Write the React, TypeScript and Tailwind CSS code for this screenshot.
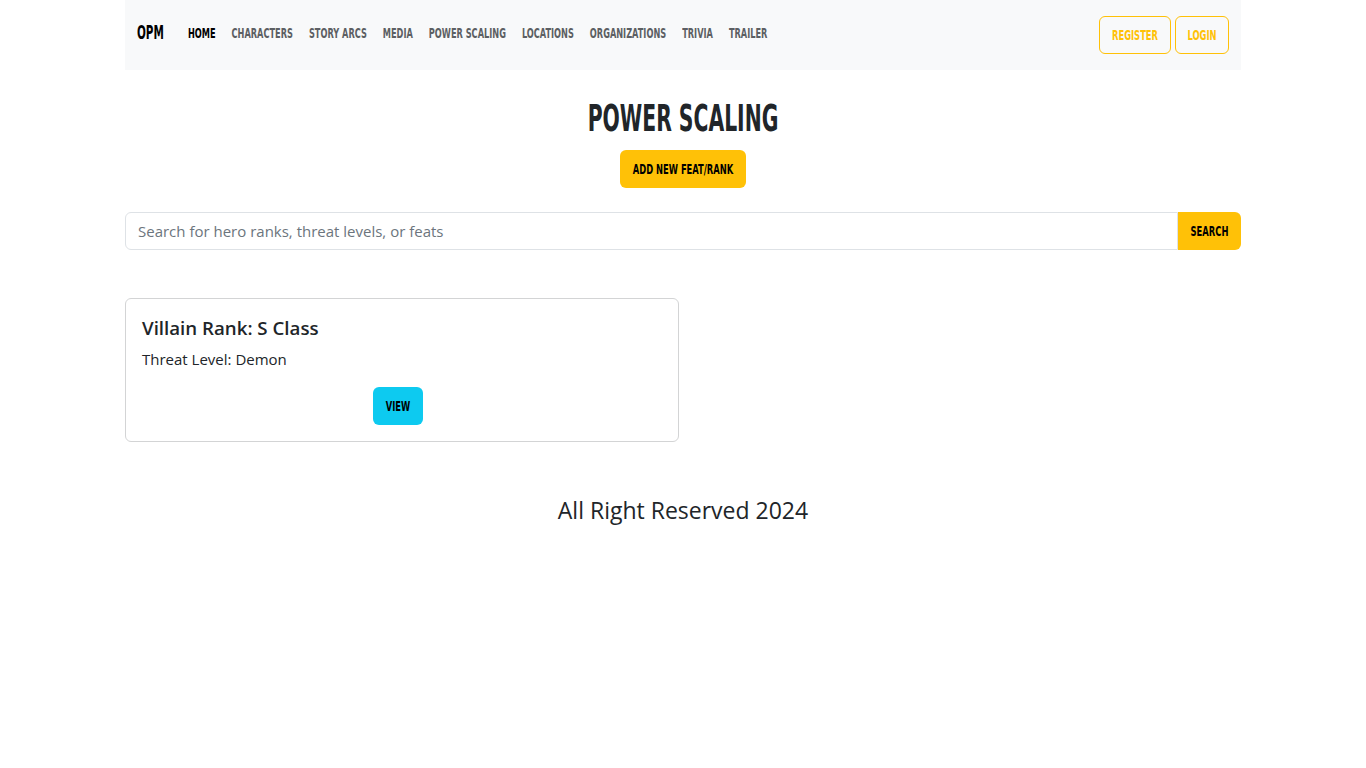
const bebas = "font-['DejaVu_Sans_Condensed','Liberation_Sans',sans-serif] font-bold uppercase";

const Tall = ({ children, className = "" }: { children: React.ReactNode; className?: string }) => (
  <span className={`inline-block scale-y-[1.6] ${className}`}>{children}</span>
);

const links = ["Home", "Characters", "Story Arcs", "Media", "Power Scaling", "Locations", "Organizations", "Trivia", "Trailer"];

const App = () => {
  return (
    <div className="min-h-screen bg-white font-['Open_Sans',sans-serif] text-[#212529]">
      <div className="mx-auto w-[1116px]">
        <nav className="flex h-[70px] items-center bg-[#f8f9fa] px-3">
          <a className={`${bebas} mr-[16px] -translate-y-px text-[11.6px] text-black`}>
            <Tall>OPM</Tall>
          </a>
          <ul className="flex">
            {links.map((l, i) => (
              <li key={l}>
                <a className={`${bebas} block px-2 text-[9.15px] ${i === 0 ? "text-black" : "text-[#5c5f63]"}`}>
                  <Tall>{l}</Tall>
                </a>
              </li>
            ))}
          </ul>
          <div className="ml-auto flex gap-1">
            <button className={`${bebas} h-[38px] w-[72px] rounded-md border border-[#ffc107] text-[9.3px] text-[#ffc107]`}>
              <Tall>Register</Tall>
            </button>
            <button className={`${bebas} h-[38px] w-[54px] rounded-md border border-[#ffc107] text-[9.3px] text-[#ffc107]`}>
              <Tall>Login</Tall>
            </button>
          </div>
        </nav>

        <main className="pt-[26px]">
          <h1 className={`${bebas} text-center text-[22.6px] leading-[44px] text-[#212529]`}>
            <Tall className="scale-y-[1.65]">Power Scaling</Tall>
          </h1>
          <div className="mt-[10px] flex justify-center">
            <button className={`${bebas} h-[38px] w-[126px] rounded-md bg-[#ffc107] text-[9.3px] text-black`}>
              <Tall>Add New Feat/Rank</Tall>
            </button>
          </div>

          <div className="mt-6 flex">
            <input
              className="h-[38px] flex-1 rounded-l-md border border-[#dee2e6] px-3 text-[15px] outline-none placeholder:text-[#6c757d]"
              placeholder="Search for hero ranks, threat levels, or feats"
            />
            <button className={`${bebas} h-[38px] w-[63px] rounded-r-md bg-[#ffc107] text-[9.3px] text-black`}>
              <Tall>Search</Tall>
            </button>
          </div>

          <div className="mt-12 flex">
            <div className="flex h-[144px] w-[554px] flex-col rounded-md border border-[#d3d4d5] px-4 pt-[17px]">
              <h5 className="text-[18.7px] font-semibold leading-[24px]">Villain Rank: S Class</h5>
              <p className="mt-[7px] text-[15px] leading-[24px]">Threat Level: Demon</p>
              <div className="mt-[16px] flex">
                <button className={`${bebas} ml-[231px] h-[38px] w-[50px] rounded-md bg-[#0dcaf0] text-[9.3px] text-black`}>
                  <Tall>View</Tall>
                </button>
              </div>
            </div>
          </div>

          <footer className="mt-[54px] text-center text-[23px] leading-[28px]">All Right Reserved 2024</footer>
        </main>
      </div>
    </div>
  );
};

export default App;
